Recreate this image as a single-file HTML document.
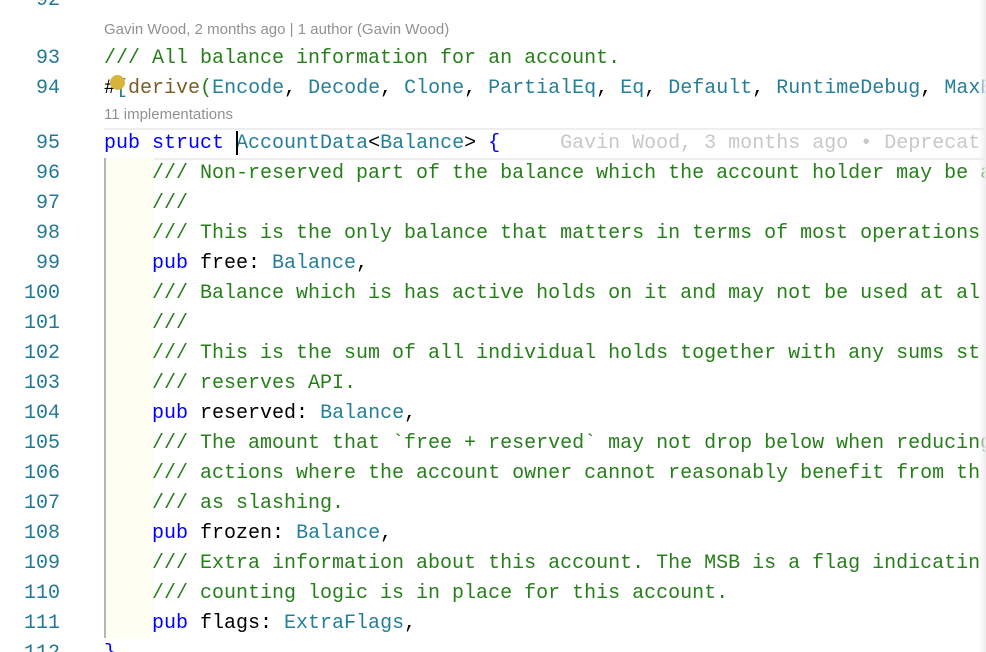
<!DOCTYPE html>
<html><head><meta charset="utf-8"><style>
body{margin:0;width:986px;height:652px;overflow:hidden;background:#fff;position:relative;font-family:"Liberation Mono",monospace;font-size:20px}
#w{position:absolute;left:0;top:0;width:986px;height:652px;overflow:hidden}
.l{position:absolute;left:104px;height:30px;line-height:30px;white-space:pre;color:#000}
.n{position:absolute;left:0;width:60px;text-align:right;height:30px;line-height:30px;color:#237893}
.c{color:#267f1a}.k{color:#0000ff}.t{color:#267f99}.f{color:#795e26}
.lens{position:absolute;left:104px;font-family:"Liberation Sans",sans-serif;font-size:15px;color:#919191}
</style></head><body><div id="w">
<div style="position:absolute;left:104px;top:128px;width:882px;height:28px;border-top:2px solid #eee;border-bottom:2px solid #eee"></div>
<div style="position:absolute;left:104px;top:158px;width:48px;height:480px;background:#fefef3;border-left:2px solid #b5b5b5"></div>
<div class="n" style="top:-14px">92</div>
<div class="lens" style="top:21px">Gavin Wood, 2 months ago | 1 author (Gavin Wood)</div>
<div class="n" style="top:44px">93</div><div class="l c" style="top:44px">/// All balance information for an account.</div>
<div class="n" style="top:74px">94</div><div class="l" style="top:74px">#<span class="t">[</span><span class="f">derive</span><span class="c">(</span><span class="t">Encode</span>, <span class="t">Decode</span>, <span class="t">Clone</span>, <span class="t">PartialEq</span>, <span class="t">Eq</span>, <span class="t">Default</span>, <span class="t">RuntimeDebug</span>, <span class="t">MaxEnc</span></div>
<div style="position:absolute;left:110px;top:75px;width:15px;height:15px;border-radius:50%;background:#d9b43b"></div>
<div class="lens" style="top:106px">11 implementations</div>
<div class="n" style="top:129px">95</div><div class="l" style="top:129px"><span class="k">pub struct</span> <span class="t">AccountData</span>&lt;<span class="t">Balance</span>&gt; <span class="k">{</span>     <span style="color:#c8c8c8">Gavin Wood, 3 months ago • Deprecat</span></div>
<div style="position:absolute;left:236px;top:131px;width:2px;height:24px;background:#000"></div>
<div class="n" style="top:159px">96</div><div class="l c" style="top:159px">    /// Non-reserved part of the balance which the account holder may be a</div>
<div class="n" style="top:189px">97</div><div class="l c" style="top:189px">    ///</div>
<div class="n" style="top:219px">98</div><div class="l c" style="top:219px">    /// This is the only balance that matters in terms of most operations</div>
<div class="n" style="top:249px">99</div><div class="l" style="top:249px">    <span class="k">pub</span> free: <span class="t">Balance</span>,</div>
<div class="n" style="top:279px">100</div><div class="l c" style="top:279px">    /// Balance which is has active holds on it and may not be used at al</div>
<div class="n" style="top:309px">101</div><div class="l c" style="top:309px">    ///</div>
<div class="n" style="top:339px">102</div><div class="l c" style="top:339px">    /// This is the sum of all individual holds together with any sums st</div>
<div class="n" style="top:369px">103</div><div class="l c" style="top:369px">    /// reserves API.</div>
<div class="n" style="top:399px">104</div><div class="l" style="top:399px">    <span class="k">pub</span> reserved: <span class="t">Balance</span>,</div>
<div class="n" style="top:429px">105</div><div class="l c" style="top:429px">    /// The amount that `free + reserved` may not drop below when reducing</div>
<div class="n" style="top:459px">106</div><div class="l c" style="top:459px">    /// actions where the account owner cannot reasonably benefit from th</div>
<div class="n" style="top:489px">107</div><div class="l c" style="top:489px">    /// as slashing.</div>
<div class="n" style="top:519px">108</div><div class="l" style="top:519px">    <span class="k">pub</span> frozen: <span class="t">Balance</span>,</div>
<div class="n" style="top:549px">109</div><div class="l c" style="top:549px">    /// Extra information about this account. The MSB is a flag indicatin</div>
<div class="n" style="top:579px">110</div><div class="l c" style="top:579px">    /// counting logic is in place for this account.</div>
<div class="n" style="top:609px">111</div><div class="l" style="top:609px">    <span class="k">pub</span> flags: <span class="t">ExtraFlags</span>,</div>
<div class="n" style="top:639px">112</div><div class="l k" style="top:639px">}</div>
<div style="position:absolute;left:978px;top:0;width:8px;height:652px;background:linear-gradient(90deg,rgba(255,255,255,0),#eee)"></div>
</div></body></html>
